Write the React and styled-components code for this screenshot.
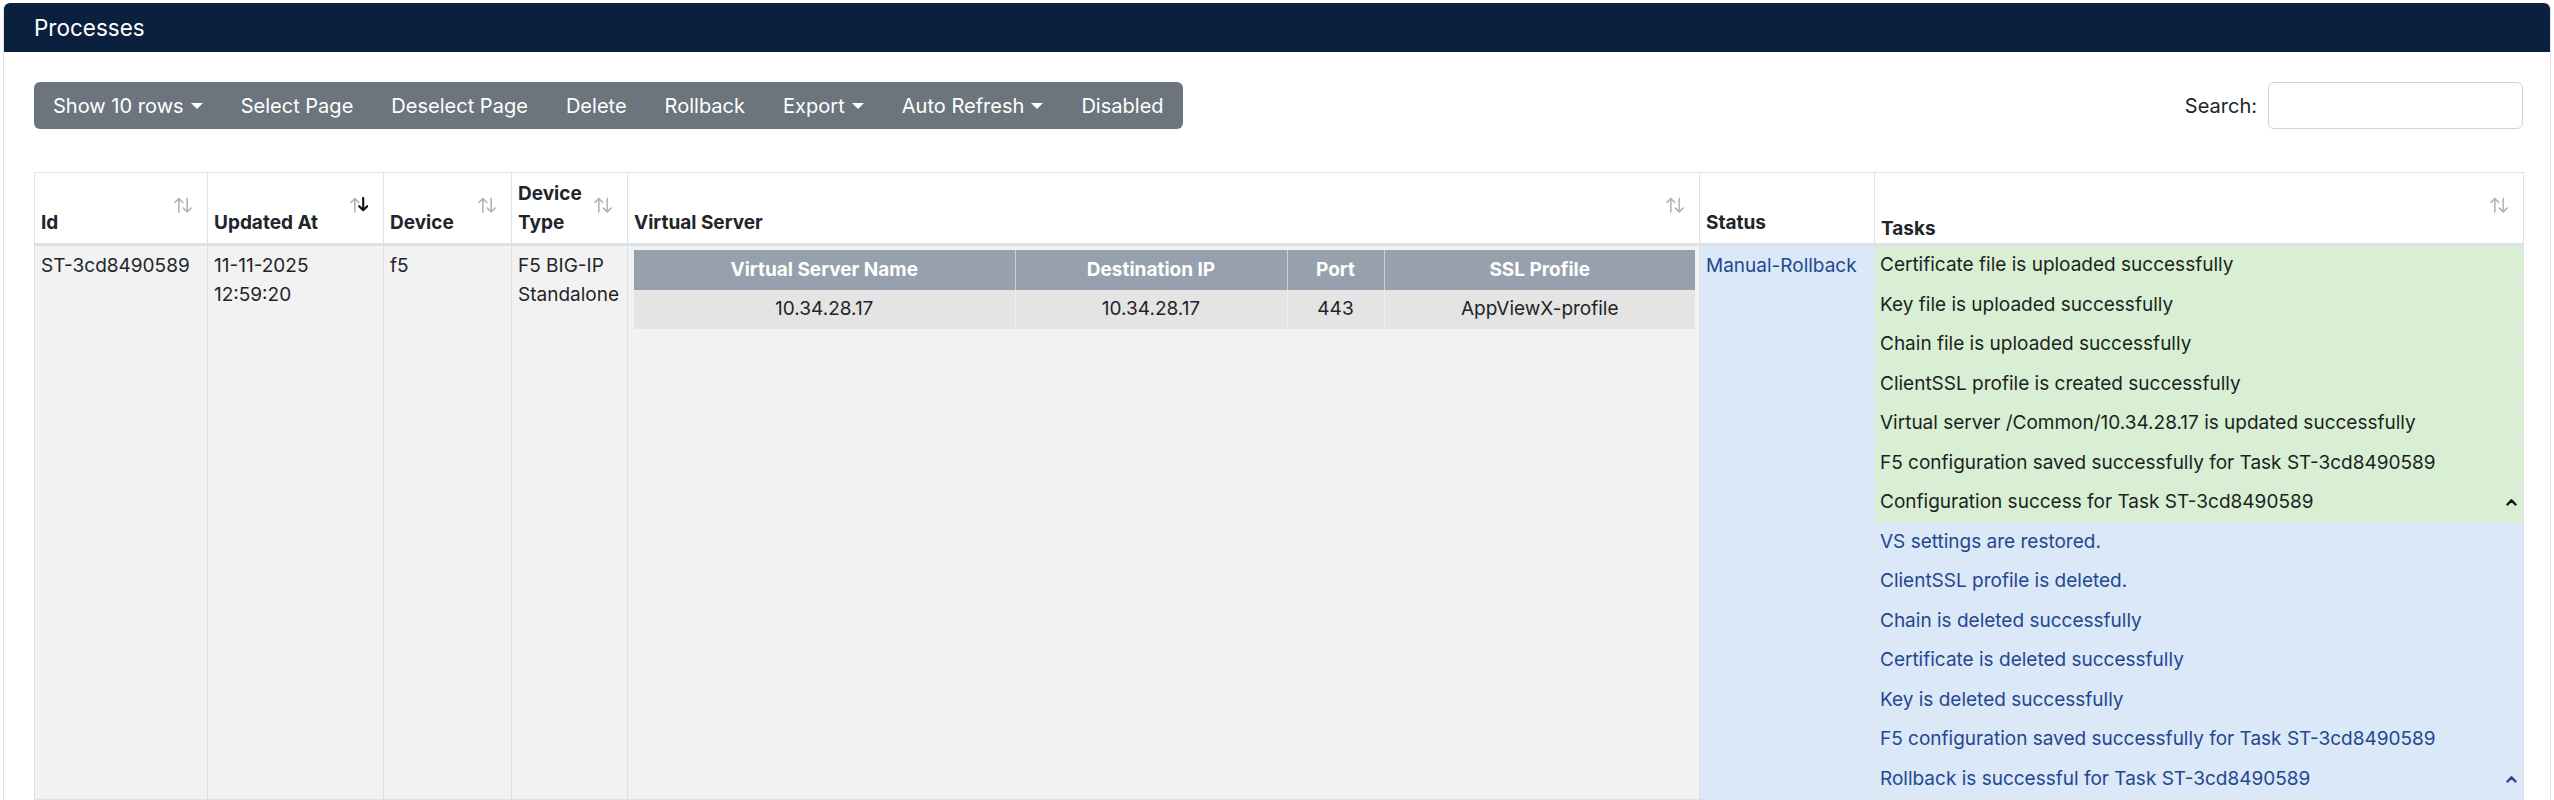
import React from 'react';
import styled, { createGlobalStyle } from 'styled-components';

const GlobalStyle = createGlobalStyle`
  body {
    margin: 0;
    background: #fff;
    font-family: Inter, "Noto Sans", sans-serif;
    color: #212529;
  }
`;

const Page = styled.div`
  padding: 3px 3px 0;
`;

const Card = styled.div`
  border: 1px solid #e2e4e7;
  border-top: 0;
  border-radius: 6px 6px 0 0;
  background: #fff;
`;

const CardHeader = styled.div`
  height: 49px;
  display: flex;
  align-items: center;
  padding: 0 30px;
  background: #0b1f3e;
  color: #fff;
  font-size: 22.5px;
  border-radius: 6px 6px 0 0;
`;

const CardBody = styled.div`
  padding: 30px 27px 0 30px;
`;

const TopBar = styled.div`
  display: flex;
  justify-content: space-between;
  align-items: center;
  margin-bottom: 43px;
`;

const Toolbar = styled.div`
  display: flex;
  height: 47px;
  background: #6c757d;
  border-radius: 6px;
`;

const ToolButton = styled.div`
  display: flex;
  align-items: center;
  padding: 0 19px;
  color: #fff;
  font-size: 20.05px;
  white-space: nowrap;

  &::after {
    content: ${p => (p.$caret ? '""' : 'none')};
    display: inline-block;
    margin-left: 7px;
    border-top: 6px solid #fff;
    border-left: 6px solid transparent;
    border-right: 6px solid transparent;
  }
`;

const SearchLabel = styled.label`
  display: flex;
  align-items: center;
  gap: 11px;
  font-size: 20px;
  color: #212529;
`;

const SearchInput = styled.input`
  width: 255px;
  height: 47px;
  box-sizing: border-box;
  border: 1px solid #ced4da;
  border-radius: 6px;
  outline: none;
`;

const Table = styled.table`
  width: 100%;
  table-layout: fixed;
  border-collapse: collapse;
  border: 1px solid #dee2e6;
  font-size: 19px;
  line-height: 28.5px;
`;

const Th = styled.th`
  position: relative;
  vertical-align: bottom;
  text-align: left;
  font-weight: 700;
  color: #212529;
  padding: 7px ${p => (p.$sortable ? 30 : 6)}px ${p => (p.$low ? 0 : 6)}px 6px;
  border: 1px solid #dee2e6;
  border-bottom: 3px solid #dee2e6;
`;

const Td = styled.td`
  vertical-align: top;
  padding: ${p => p.$pad || '6px'};
  border: 1px solid #dee2e6;
  background: ${p => (p.$tone === 'info' ? '#dae8f8' : '#f2f2f2')};
  color: ${p => (p.$tone === 'info' ? '#24478f' : '#212529')};
`;

const SortMark = styled.svg`
  position: absolute;
  right: 15px;
  top: 24px;
`;

const Inner = styled.table`
  width: 100%;
  table-layout: fixed;
  border-collapse: collapse;
  text-align: center;
`;

const InnerTh = styled.th`
  height: 40px;
  padding: 0 6px;
  background: #97a1ae;
  color: #fff;
  font-weight: 700;
  border-right: 1px solid #c9ced5;
  &:last-child { border-right: 0; }
`;

const InnerTd = styled.td`
  height: 39px;
  padding: 0 6px;
  background: #e4e4e4;
  color: #212529;
  border-right: 1px solid #ececec;
  &:last-child { border-right: 0; }
`;

const TaskList = styled.ul`
  list-style: none;
  margin: 0;
  padding: 0;
`;

const TaskItem = styled.li`
  display: flex;
  align-items: center;
  justify-content: space-between;
  padding: 5px 6px 5px 5px;
  background: ${p => (p.$ok ? '#d8efd3' : '#dae8f8')};
  color: ${p => (p.$ok ? '#1c1f23' : '#24478f')};
  border-bottom: 1px solid ${p => (p.$ok ? '#e2eedf' : '#e6ecf3')};
`;

const SortIcon = ({ active }) => (
  <SortMark width="18" height="16" viewBox="0 0 18 16">
    <path d="M4.8 15V1.5M1 5.4L4.8 1.5L8.6 5.4" fill="none" stroke="#b4b4b4" strokeWidth="1.6" strokeLinecap="round" strokeLinejoin="round" />
    <path
      d={active ? 'M13.2 1v12.2M9.2 9.2l4 4 4-4' : 'M13.2 1.5V15M9.4 11.1l3.8 3.9 3.8-3.9'}
      fill="none"
      stroke={active ? '#111' : '#b4b4b4'}
      strokeWidth={active ? 2.1 : 1.6}
      strokeLinecap="round"
      strokeLinejoin="round"
    />
  </SortMark>
);

const Chevron = ({ color }) => (
  <svg width="11" height="8" viewBox="0 0 11 8">
    <path d="M1.5 6.5L5.5 2.3 9.5 6.5" fill="none" stroke={color} strokeWidth="2.4" strokeLinecap="round" strokeLinejoin="round" />
  </svg>
);

const tools = [
  { label: 'Show 10 rows', caret: true },
  { label: 'Select Page' },
  { label: 'Deselect Page' },
  { label: 'Delete' },
  { label: 'Rollback' },
  { label: 'Export', caret: true },
  { label: 'Auto Refresh', caret: true },
  { label: 'Disabled' }
];

const tasks = [
  { text: 'Certificate file is uploaded successfully', ok: true },
  { text: 'Key file is uploaded successfully', ok: true },
  { text: 'Chain file is uploaded successfully', ok: true },
  { text: 'ClientSSL profile is created successfully', ok: true },
  { text: 'Virtual server /Common/10.34.28.17 is updated successfully', ok: true },
  { text: 'F5 configuration saved successfully for Task ST-3cd8490589', ok: true },
  { text: 'Configuration success for Task ST-3cd8490589', ok: true, last: true },
  { text: 'VS settings are restored.' },
  { text: 'ClientSSL profile is deleted.' },
  { text: 'Chain is deleted successfully' },
  { text: 'Certificate is deleted successfully' },
  { text: 'Key is deleted successfully' },
  { text: 'F5 configuration saved successfully for Task ST-3cd8490589' },
  { text: 'Rollback is successful for Task ST-3cd8490589', last: true }
];

export default function App() {
  return (
    <Page>
      <GlobalStyle />
      <Card>
        <CardHeader>Processes</CardHeader>
        <CardBody>
          <TopBar>
            <Toolbar>
              {tools.map(t => (
                <ToolButton key={t.label} $caret={t.caret}>{t.label}</ToolButton>
              ))}
            </Toolbar>
            <SearchLabel>
              Search:
              <SearchInput type="search" />
            </SearchLabel>
          </TopBar>

          <Table>
            <colgroup>
              <col style={{ width: 173 }} />
              <col style={{ width: 176 }} />
              <col style={{ width: 128 }} />
              <col style={{ width: 116 }} />
              <col style={{ width: 1072 }} />
              <col style={{ width: 175 }} />
              <col style={{ width: 649 }} />
            </colgroup>
            <thead>
              <tr>
                <Th $sortable>Id<SortIcon /></Th>
                <Th $sortable>Updated At<SortIcon active /></Th>
                <Th $sortable>Device<SortIcon /></Th>
                <Th $sortable>Device Type<SortIcon /></Th>
                <Th $sortable>Virtual Server<SortIcon /></Th>
                <Th>Status</Th>
                <Th $sortable $low>Tasks<SortIcon /></Th>
              </tr>
            </thead>
            <tbody>
              <tr>
                <Td>ST-3cd8490589</Td>
                <Td>11-11-2025 12:59:20</Td>
                <Td>f5</Td>
                <Td>F5 BIG-IP Standalone</Td>
                <Td $pad="4px 5px 6px 6px">
                  <Inner>
                    <colgroup>
                      <col style={{ width: 381 }} />
                      <col style={{ width: 272 }} />
                      <col style={{ width: 97 }} />
                      <col style={{ width: 311 }} />
                    </colgroup>
                    <thead>
                      <tr>
                        <InnerTh>Virtual Server Name</InnerTh>
                        <InnerTh>Destination IP</InnerTh>
                        <InnerTh>Port</InnerTh>
                        <InnerTh>SSL Profile</InnerTh>
                      </tr>
                    </thead>
                    <tbody>
                      <tr>
                        <InnerTd>10.34.28.17</InnerTd>
                        <InnerTd>10.34.28.17</InnerTd>
                        <InnerTd>443</InnerTd>
                        <InnerTd>AppViewX-profile</InnerTd>
                      </tr>
                    </tbody>
                  </Inner>
                </Td>
                <Td $tone="info">Manual-Rollback</Td>
                <Td $pad="0">
                  <TaskList>
                    {tasks.map((t, i) => (
                      <TaskItem key={i} $ok={t.ok}>
                        <span>{t.text}</span>
                        {t.last && <Chevron color={t.ok ? '#111' : '#24478f'} />}
                      </TaskItem>
                    ))}
                  </TaskList>
                </Td>
              </tr>
            </tbody>
          </Table>
        </CardBody>
      </Card>
    </Page>
  );
}
